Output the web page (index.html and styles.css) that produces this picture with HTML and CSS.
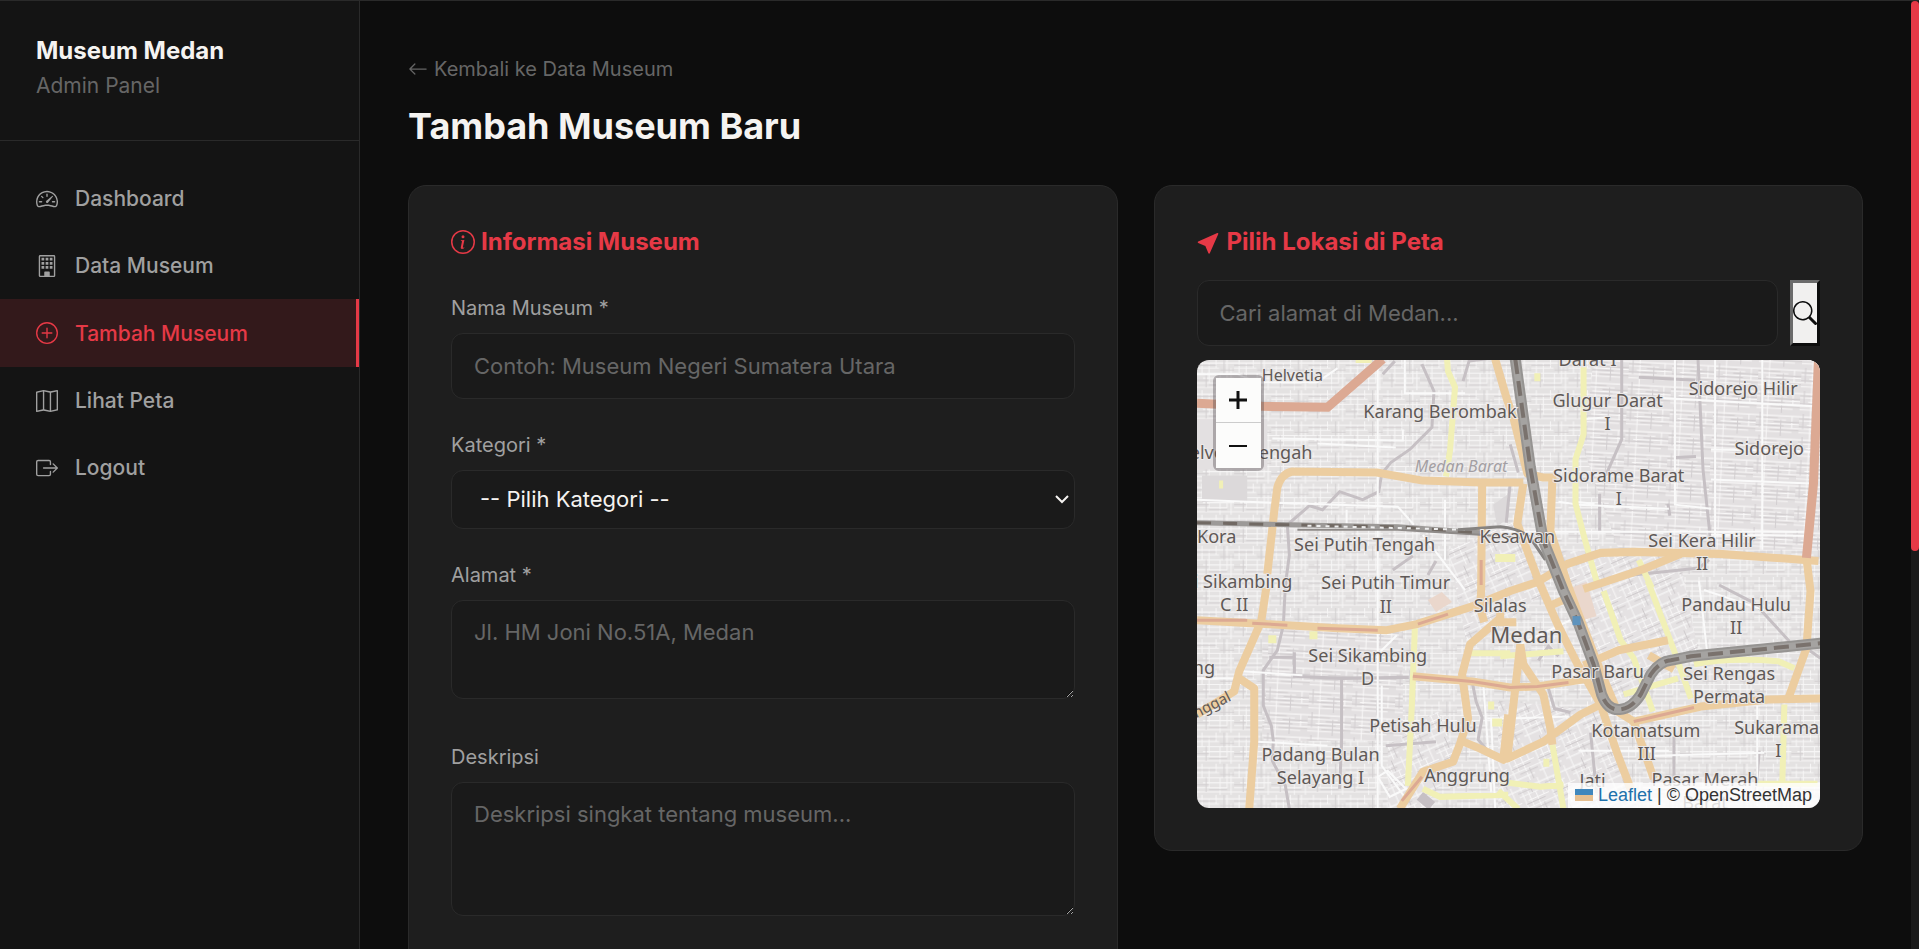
FILE: index.html
```html
<!DOCTYPE html>
<html lang="id">
<head>
<meta charset="utf-8">
<title>Tambah Museum - Museum Medan</title>
<link rel="stylesheet" href="styles.css">
</head>
<body>
<aside class="sidebar">
  <div class="brand">
    <div class="brand-name">Museum Medan</div>
    <div class="brand-sub">Admin Panel</div>
  </div>
  <nav class="nav">
    <a class="nav-link" href="#dashboard">
      <svg class="icon" viewBox="0 0 16 16"><path d="M8 4a.5.5 0 0 1 .5.5V6a.5.5 0 0 1-1 0V4.5A.5.5 0 0 1 8 4M3.732 5.732a.5.5 0 0 1 .707 0l.915.914a.5.5 0 1 1-.708.708l-.914-.915a.5.5 0 0 1 0-.707M2 10a.5.5 0 0 1 .5-.5h1.586a.5.5 0 0 1 0 1H2.5A.5.5 0 0 1 2 10m9.5 0a.5.5 0 0 1 .5-.5h1.5a.5.5 0 0 1 0 1H12a.5.5 0 0 1-.5-.5m.754-4.246a.39.39 0 0 0-.527-.02L7.547 9.31a.91.91 0 1 0 1.302 1.258l3.434-4.297a.39.39 0 0 0-.029-.518z"/><path fill-rule="evenodd" d="M0 10a8 8 0 1 1 15.547 2.661c-.442 1.253-1.845 1.602-2.932 1.25C11.309 13.488 9.475 13 8 13c-1.474 0-3.31.488-4.615.911-1.087.352-2.49.003-2.932-1.25A8 8 0 0 1 0 10m8-7a7 7 0 0 0-6.603 9.329c.203.575.923.876 1.68.63C4.397 12.533 6.358 12 8 12s3.604.532 4.923.96c.757.245 1.477-.056 1.68-.631A7 7 0 0 0 8 3"/></svg>
      Dashboard
    </a>
    <a class="nav-link" href="#data">
      <svg class="icon" viewBox="0 0 16 16"><path fill-rule="evenodd" d="M3 0h10a1 1 0 0 1 1 1v14a1 1 0 0 1-1 1H3a1 1 0 0 1-1-1V1a1 1 0 0 1 1-1m0 1v14h3v-2.500a.5.5 0 0 1 .5-.5h3a.5.5 0 0 1 .5.5V15h3V1z"/><path d="M4 2h2v2H4zM7 2h2v2H7zM10 2h2v2h-2zM4 5h2v2H4zM7 5h2v2H7zM10 5h2v2h-2zM4 8h2v2H4zM7 8h2v2H7zM10 8h2v2h-2z"/></svg>
      Data Museum
    </a>
    <a class="nav-link active" href="#tambah" aria-current="page">
      <svg class="icon" viewBox="0 0 16 16"><path d="M8 15A7 7 0 1 1 8 1a7 7 0 0 1 0 14m0 1A8 8 0 1 0 8 0a8 8 0 0 0 0 16"/><path d="M8 4a.5.5 0 0 1 .5.5v3h3a.5.5 0 0 1 0 1h-3v3a.5.5 0 0 1-1 0v-3h-3a.5.5 0 0 1 0-1h3v-3A.5.5 0 0 1 8 4"/></svg>
      Tambah Museum
    </a>
    <a class="nav-link" href="#peta">
      <svg class="icon" viewBox="0 0 16 16"><path fill-rule="evenodd" d="M15.817.113A.5.5 0 0 1 16 .5v14a.5.5 0 0 1-.402.49l-5 1a.5.5 0 0 1-.196 0L5.500 15.010l-4.902.98A.5.5 0 0 1 0 15.500v-14a.5.5 0 0 1 .402-.49l5-1a.5.5 0 0 1 .196 0L10.500.99l4.902-.98a.5.5 0 0 1 .415.103M10 1.910l-4-.8v12.980l4 .8zm1 12.980 4-.8V1.110l-4 .8zm-6-.8V1.110l-4 .8v12.980z"/></svg>
      Lihat Peta
    </a>
    <a class="nav-link" href="#logout">
      <svg class="icon" viewBox="0 0 16 16"><path fill-rule="evenodd" d="M10 12.500a.5.5 0 0 1-.5.5h-8a.5.5 0 0 1-.5-.5v-9a.5.5 0 0 1 .5-.5h8a.5.5 0 0 1 .5.5v2a.5.5 0 0 0 1 0v-2A1.500 1.500 0 0 0 9.500 2h-8A1.500 1.500 0 0 0 0 3.500v9A1.500 1.500 0 0 0 1.500 14h8a1.500 1.500 0 0 0 1.500-1.500v-2a.5.5 0 0 0-1 0z"/><path fill-rule="evenodd" d="M15.854 8.354a.5.5 0 0 0 0-.708l-3-3a.5.5 0 0 0-.708.708L14.293 7.500H5.500a.5.5 0 0 0 0 1h8.793l-2.147 2.146a.5.5 0 0 0 .708.708z"/></svg>
      Logout
    </a>
  </nav>
</aside>

<main class="main">
  <a class="back" href="#data">
    <svg class="icon-back" viewBox="0 0 16 16"><path fill-rule="evenodd" d="M15 8a.5.5 0 0 0-.5-.5H2.707l3.147-3.146a.5.5 0 1 0-.708-.708l-4 4a.5.5 0 0 0 0 .708l4 4a.5.5 0 0 0 .708-.708L2.707 8.500H14.500A.5.5 0 0 0 15 8"/></svg>
    Kembali ke Data Museum
  </a>
  <h1 class="page-title">Tambah Museum Baru</h1>

  <div class="columns">
    <form class="card">
      <h2 class="card-title">
        <svg class="icon-title" viewBox="0 0 16 16"><path d="M8 15A7 7 0 1 1 8 1a7 7 0 0 1 0 14m0 1A8 8 0 1 0 8 0a8 8 0 0 0 0 16"/><path d="m8.930 6.588-2.290.287-.082.380.450.083c.294.070.352.176.288.469l-.738 3.468c-.194.897.105 1.319.808 1.319.545 0 1.178-.252 1.465-.598l.088-.416c-.2.176-.492.246-.686.246-.275 0-.375-.193-.304-.533zM9 4.500a1 1 0 1 1-2 0 1 1 0 0 1 2 0"/></svg>
        Informasi Museum
      </h2>
      <div class="fields">
        <div class="field">
          <label for="nama">Nama Museum *</label>
          <input class="control" id="nama" type="text" placeholder="Contoh: Museum Negeri Sumatera Utara">
        </div>
        <div class="field">
          <label for="kategori">Kategori *</label>
          <div class="select-wrap">
            <select class="control select" id="kategori">
              <option>-- Pilih Kategori --</option>
            </select>
            <svg class="chevron" viewBox="0 0 14 9"><path d="M1 1l6 6 6-6" fill="none" stroke="currentColor" stroke-width="2"/></svg>
          </div>
        </div>
        <div class="field field-area">
          <label for="alamat">Alamat *</label>
          <textarea class="control area-short" id="alamat" placeholder="Jl. HM Joni No.51A, Medan"></textarea>
        </div>
        <div class="field field-area">
          <label for="deskripsi">Deskripsi</label>
          <textarea class="control area-tall" id="deskripsi" placeholder="Deskripsi singkat tentang museum..."></textarea>
        </div>
      </div>
    </form>

    <section class="card card-map">
      <h2 class="card-title">
        <svg class="icon-title" viewBox="0 0 16 16"><path d="M14.082 2.182a.5.5 0 0 1 .103.557L8.528 15.467a.5.5 0 0 1-.917-.007L5.570 10.694.803 8.652a.5.5 0 0 1-.006-.916l12.728-5.657a.5.5 0 0 1 .556.103z"/></svg>
        Pilih Lokasi di Peta
      </h2>
      <div class="search">
        <input class="control" type="text" aria-label="Cari alamat" placeholder="Cari alamat di Medan...">
        <button class="search-button" type="button" aria-label="Cari">
          <svg class="icon-search" viewBox="0 0 16 16"><path d="M11.742 10.344a6.500 6.500 0 1 0-1.397 1.398h-.001q.044.060.098.115l3.850 3.850a1 1 0 0 0 1.415-1.414l-3.850-3.850a1 1 0 0 0-.115-.1zM12 6.500a5.500 5.500 0 1 1-11 0 5.500 5.500 0 0 1 11 0"/></svg>
        </button>
      </div>
      <div class="map">
        <svg class="map-canvas" viewBox="0 0 621 448" preserveAspectRatio="xMidYMid slice">
          <defs>
            <pattern id="blocks" width="37" height="31" patternUnits="userSpaceOnUse">
              <path d="M0 4h37M0 9h22M0 14h37M6 19h31M0 24h30M0 28h37M5 0v14M12 4v20M19 0v9M23 14v17M30 0v24M34 9v22" stroke="#f7f6f6" stroke-width="1" fill="none"/>
              <path d="M0 6h19M23 11h14M0 21h12M12 26h18M9 14v14M27 0v14" stroke="#d3d0d1" stroke-width="1" fill="none"/>
            </pattern>
            <pattern id="rows" width="43" height="23" patternUnits="userSpaceOnUse" patternTransform="rotate(3)">
              <path d="M0 3h43M0 7h30M8 11h35M0 15h43M0 19h36M11 0v23M36 3v12" stroke="#f9f8f8" stroke-width="1" fill="none"/>
              <path d="M0 5h22M18 9h25M0 13h28M14 17h29M4 0v15M25 7v16" stroke="#d2ced0" stroke-width="1" fill="none"/>
            </pattern>
            <pattern id="slant" width="29" height="37" patternUnits="userSpaceOnUse" patternTransform="rotate(-24)">
              <path d="M0 5h29M0 12h20M7 18h22M0 25h29M0 32h24M4 0v37M10 5v20M17 12v25M24 0v18" stroke="#f8f7f7" stroke-width="1" fill="none"/>
              <path d="M0 8h17M4 21h20M10 28h19M14 0v12M21 25v12" stroke="#cfcbcd" stroke-width="1" fill="none"/>
            </pattern>
          </defs>
          <rect width="621" height="448" fill="#e4e2e2"/>
          <rect width="621" height="448" fill="url(#blocks)"/>
          <path d="M395 0H621V190H420L385 90zM65 270H205V380H65zM0 60H70V110H0z" fill="#e3e0e1"/>
          <path d="M395 0H621V190H420L385 90zM65 270H205V380H65z" fill="url(#rows)"/>
          <path d="M345 190L480 195 500 295 440 330 405 345zM300 340L400 350 440 448H300zM190 385L240 350 260 400 225 448H190zM250 190L320 160 350 230 270 290z" fill="#e5e2e3"/>
          <path d="M345 190L480 195 500 295 440 330 405 345zM300 340L400 350 440 448H300zM190 385L240 350 260 400 225 448H190zM250 190L320 160 350 230 270 290z" fill="url(#slant)"/>
          <path d="M5 116h45v26H5zM295 145l14 -10 2 22 -12 10z" fill="#dcd9da"/>
          <path d="M372 228l16 -6 10 34 -14 4zM230 240l14-8 10 10-16 10z" fill="#ead7cc"/>
          <g fill="none" stroke="#c6c0c4" stroke-width="3">
            <path d="M224 5L236 32 234 68 212 90 193 103 184 114 181 132 165 140 142 132 125 150 112 146 90 165 92 195 88 225 86 265 80 290 66 310 66 345 74 365 76 380 75 400 88 425 92 448"/>
            <path d="M185 15l12 -13M265 22l6 -20 30 -4M97 292v24l47 2 67 -1M144 318v65l-2 45M72 297l25 0M188 385l50 -4M195 210l20 -14M230 215l8 -14"/>
            <path d="M274 321l4 20 6 16 -4 22 12 14M312 85l8 28M312 123l-4 40M499 0l5 110 8 75M440 18l56 3M423 0v80l-16 36M477 98l20 -1M401 134v38M469 144l2 12M425 216l75 -8 10 -8M520 225l35 18 35 38M607 288l14 10M340 300l10 -14 10 10M350 328l6 20 16 4M392 372l6 60M475 376v60M560 390l-4 50"/>
            <path d="M222 435l12 10" stroke-width="10"/>
          </g>
          <g fill="none" stroke="#fafafa" stroke-width="3">
            <path d="M0 15h40l20 8h60l20 -14M207 0v34l60 0M205 70v11l-130 -2M120 84l78 4M0 140l100 4M80 143l120 4 16 18M180 0v450M247 140v60M149 150v20M225 175l42 55M179 295l20 -20M60 381l70 4M45 311l60 4M0 318h40M184 325v80l22 30M285 321l8 110M289 358h25M293 358l4 90" stroke-width="2"/>
            <path d="M450 38l165 9M476 0l0 145 36 4M516 0v188M360 142l20 3 90 4M384 60l25 -2M512 90l100 2M512 120l100 4M512 175l98 1M396 144l-20 -2M322 284l50 -24M500 221l8 70M505 230l60 20M310 358l60 -2M455 395l110 -3M558 345v100M380 390l90 0M563 0v190M302 172h310" stroke-width="2"/>
            <path d="M190 410l18 18 -16 8 -12 -20z" stroke-width="2"/>
          </g>
          <g fill="none" stroke="#f1f0b6" stroke-width="6">
            <path d="M249 0L250 12 257 28 252 91 248 117M385 8V75L377 100V144L385 175 399 225"/>
            <path d="M217 268L214 345 210 425M405 231L422 280 435 298 454 351M449 221L475 290 492 338M495 304Q530 297 579 301L595 308M302 296L365 291M425 334L479 318M354 384L365 448M585 344L583 421M225 428L242 436 310 434M302 421L342 426 365 424M440 200L453 228M300 430l20 18M272 293h40M558 423h60"/>
            <path d="M158 0h16M112 275h8M75 275v8M22 125h4M297 198h20M290 345h6M294 362h10M345 402h6M336 18h6" stroke-width="8"/>
          </g>
          <g fill="none" stroke="#eccda0" stroke-width="8" stroke-linejoin="round">
            <path d="M70 214L77 151 80 128Q84 114 95 112L179 113 225 121 284 123 325 123"/>
            <path d="M284 124L283 231 282 248 286 262M69 228L64 261 42 311 37 331 0 354M42 318L57 328V381L52 448"/>
            <path d="M0 260L72 264 140 268 189 270 219 264 275 246 312 231 339 222 369 204 402 193 435 192 520 194 619 201"/>
            <path d="M482 194L445 209 385 229M297 0L309 41 315 58 329 114 345 118 354 118 352 171 369 224 379 251 402 311 419 351 435 361 502 346 569 339 621 338"/>
            <path d="M325 124L319 164 339 218 359 264 379 304 402 344 419 394 432 428"/>
            <path d="M302 258L272 284 264 314 270 358 262 383 255 401 225 411 202 448M265 381L282 388 305 399 310 354"/>
            <path d="M322 284L317 328 309 398 345 381 382 354 402 344M322 284L325 304 345 334 352 368 354 384M435 361L455 418M385 305L420 290 469 280M450 295l25 14M607 198L611 231 607 288 589 338M302 250l0 12 16 0M348 247l24 -10"/>
            <path d="M215 316L274 321 312 327 339 326 392 318"/>
          </g>
          <g fill="none" stroke="#dca993" stroke-width="9">
            <path d="M0 44L65 47 130 48 185 0M619 0L614 124 607 198"/>
            <path d="M215 316L274 321 312 327 339 326 370 322M55 263l35 2M435 361l60 -14M0 260h50M120 268l60 2M220 264l30 -10M283 200v25M204 440l20 -24" stroke-width="3"/>
          </g>
          <g fill="none">
            <path d="M0 163L92 165 200 167 282 173" stroke="#9c9997" stroke-width="5"/>
            <path d="M100 170L200 170 282 175 322 178" stroke="#8e8a88" stroke-width="2"/>
            <path d="M0 163L92 165 200 167 282 173" stroke="#716963" stroke-width="3" stroke-dasharray="14 12"/>
            <path d="M110 166L270 170" stroke="#eeeeee" stroke-width="2" stroke-dasharray="4 5"/>
            <path d="M260 170L302 167Q322 169 332 178L347 200" stroke="#858280" stroke-width="3"/>
            <path d="M317 0L332 108 345 181 365 231 379 261 395 304 403 334Q409 350 421 349 433 348 442 334L452 314Q461 301 472 300L492 296 621 283" stroke="#969492" stroke-width="11"/>
            <path d="M317 0L332 108 345 181 365 231 379 261 395 304 403 334Q409 350 421 349 433 348 442 334L452 314Q461 301 472 300L492 296 621 283" stroke="#a5a3a1" stroke-width="7"/>
            <path d="M317 0L332 108 345 181 365 231 379 261 395 304 403 334Q409 350 421 349 433 348 442 334L452 314Q461 301 472 300L492 296 621 283" stroke="#7a726d" stroke-width="4" stroke-dasharray="15 7"/>
          </g>
          <rect x="374" y="256" width="8" height="9" fill="#5e93bd"/>
          <g class="places">
            <text class="minor" x="95" y="22">Helvetia</text>
            <text x="242" y="59">Karang Berombak</text>
            <text class="district" x="263" y="112">Medan Barat</text>
            <text class="end" x="115" y="100">Helvetia Tengah</text>
            <text class="start" x="0" y="183">Kora</text>
            <text x="167" y="191">Sei Putih Tengah</text>
            <text x="319" y="183">Kesawan</text>
            <text class="end" x="95" y="228">Sei Sikambing</text>
            <text x="37" y="251">C II</text>
            <text x="188" y="229">Sei Putih Timur</text>
            <text x="188" y="253">II</text>
            <text x="389" y="7">Darat I</text>
            <text x="409" y="48">Glugur Darat</text>
            <text x="409" y="71">I</text>
            <text x="544" y="36">Sidorejo Hilir</text>
            <text x="570" y="96">Sidorejo</text>
            <text x="420" y="122">Sidorame Barat</text>
            <text x="420" y="145">I</text>
            <text x="503" y="187">Sei Kera Hilir</text>
            <text x="503" y="210">II</text>
            <text x="302" y="252">Silalas</text>
            <text class="city" x="328" y="283">Medan</text>
            <text x="170" y="302">Sei Sikambing</text>
            <text x="170" y="325">D</text>
            <text class="end" x="18" y="314">ng</text>
            <text class="street" transform="translate(-9 362) rotate(-27)">unggal</text>
            <text x="225" y="371">Petisah Hulu</text>
            <text x="123" y="400">Padang Bulan</text>
            <text x="123" y="423">Selayang I</text>
            <text x="269" y="421">Anggrung</text>
            <text x="537" y="251">Pandau Hulu</text>
            <text x="537" y="274">II</text>
            <text x="399" y="318">Pasar Baru</text>
            <text x="530" y="320">Sei Rengas</text>
            <text x="530" y="343">Permata</text>
            <text x="447" y="376">Kotamatsum</text>
            <text x="448" y="399">III</text>
            <text class="start" x="535" y="373">Sukaramai</text>
            <text x="579" y="396">I</text>
            <text x="394" y="426">Jati</text>
            <text x="506" y="425">Pasar Merah</text>
            <text x="506" y="448">Barat</text>
          </g>
        </svg>
        <div class="zoom">
          <button class="zoom-button" type="button" aria-label="Perbesar"><svg class="zoom-icon" viewBox="0 0 18 18"><path d="M0 9h18M9 0v18"/></svg></button>
          <button class="zoom-button" type="button" aria-label="Perkecil"><svg class="zoom-icon" viewBox="0 0 18 18"><path class="thin" d="M0 9h18"/></svg></button>
        </div>
        <div class="attribution">
          <a href="#leaflet"><svg class="flag" viewBox="0 0 18 12"><path fill="#3f87bd" d="M0 0h18v6H0z"/><path fill="#e6bf90" d="M0 6h18v6H0z"/></svg> Leaflet</a> | © OpenStreetMap
        </div>
      </div>
    </section>
  </div>
</main>
<div class="rail"><div class="rail-thumb"></div></div>
</body>
</html>
```
FILE: styles.css
```css
* { box-sizing: border-box; }

body {
  margin: 0;
  height: 100vh;
  overflow: hidden;
  display: flex;
  border-top: 1px solid #2a2a2a;
  background: #0d0d0d;
  color: #f5f3f1;
  font-family: Inter, "Liberation Sans", sans-serif;
  font-size: 20px;
}

a { color: inherit; text-decoration: none; }
svg { display: block; fill: currentColor; flex: none; }

.sidebar {
  width: 360px;
  flex: none;
  background: #141414;
  border-right: 1px solid #2a2a2a;
}
.brand {
  height: 140px;
  padding: 32px 36px 0;
  border-bottom: 1px solid #2a2a2a;
}
.brand-name { font-size: 24px; line-height: 36px; font-weight: 700; }
.brand-sub { font-size: 21px; line-height: 34px; color: #666; }

.nav { padding-top: 24px; }
.nav-link {
  display: flex;
  align-items: center;
  gap: 17px;
  min-height: 67px;
  padding: 0 36px;
  color: #a0a0a0;
  font-size: 21px;
  font-weight: 500;
}
.nav-link.active {
  min-height: 68px;
  background: #33191b;
  color: #e63946;
  border-right: 3px solid #e63946;
}
.icon { width: 22px; height: 22px; }

.main {
  flex: 1;
  min-width: 0;
  padding: 53px 48px 0;
}
.back {
  display: flex;
  align-items: center;
  gap: 6px;
  line-height: 30px;
  color: #666;
}
.icon-back { width: 20px; height: 20px; }
.page-title {
  margin: 20px 0 36px;
  font-size: 36px;
  line-height: 45px;
  font-weight: 700;
}

.columns {
  display: grid;
  grid-template-columns: 1fr 1fr;
  gap: 36px;
  align-items: start;
}
.card {
  padding: 42px;
  background: #1e1e1e;
  border: 1px solid #2a2a2a;
  border-radius: 18px;
  min-width: 0;
}
.card-title {
  display: flex;
  align-items: center;
  gap: 6px;
  margin: 0 0 38px;
  color: #e63946;
  font-size: 24px;
  line-height: 28px;
  font-weight: 700;
}
.card-map .card-title { margin-bottom: 24px; }
.icon-title { width: 24px; height: 24px; }

.fields { display: grid; gap: 32px; }
.field { display: grid; gap: 10px; }
.field-area { padding-bottom: 12px; }
label { line-height: 29px; color: #a0a0a0; }

.control {
  width: 100%;
  height: 66px;
  padding: 18px 22px;
  border: 1px solid #2a2a2a;
  border-radius: 12px;
  background: #1a1a1a;
  color: #f5f3f1;
  font: 22px/27px Inter, "Liberation Sans", sans-serif;
}
.control::placeholder { color: #666; opacity: 1; }
.select-wrap { display: grid; align-items: center; }
.select-wrap > * { grid-area: 1 / 1; }
.select {
  height: 59px;
  padding: 0 28px;
  appearance: none;
}
.chevron {
  width: 14px;
  height: 9px;
  margin-right: 6px;
  justify-self: end;
  pointer-events: none;
}
textarea.control { display: block; resize: vertical; }
textarea.area-short { height: 99px; }
textarea.area-tall { height: 134px; }

.search {
  display: flex;
  gap: 12px;
  margin-bottom: 14px;
}
.search-button {
  flex: none;
  width: 30px;
  padding: 0;
  display: grid;
  place-items: center;
  border: 3px solid;
  border-color: #6b6b6b #0d0d0d #0d0d0d #6b6b6b;
  background: #f1f0ef;
  color: #0d0d0d;
}
.icon-search { width: 24px; height: 24px; }

.map {
  position: relative;
  height: 448px;
  border-radius: 12px;
  overflow: hidden;
}
.map-canvas { width: 100%; height: 100%; }
.places {
  font: 400 18px "Noto Sans", sans-serif;
  text-anchor: middle;
  fill: #5f5957;
  stroke: #ebe9e9;
  stroke-width: 2px;
  paint-order: stroke;
}
.places .minor { font-size: 16px; }
.places .end { text-anchor: end; }
.places .start { text-anchor: start; }
.places .city { font-size: 22px; }
.places .district { font-size: 16px; font-style: italic; fill: #a39fa3; }
.places .street { font-size: 15px; text-anchor: start; stroke: none; }

.zoom {
  position: absolute;
  top: 15px;
  left: 16px;
  border: 3px solid rgba(70, 60, 65, 0.35);
  border-radius: 6px;
}
.zoom-button {
  display: grid;
  place-items: center;
  width: 45px;
  height: 45px;
  padding: 0;
  border: 0;
  background: #fcfcfb;
}
.zoom-button:first-child { border-bottom: 1px solid #ccc; }
.zoom-icon { width: 18px; height: 18px; stroke: #111; stroke-width: 3px; }
.zoom-icon .thin { stroke-width: 2px; }

.attribution {
  position: absolute;
  right: 0;
  bottom: 0;
  padding: 0 8px 0 7px;
  background: rgba(255, 255, 255, 0.8);
  color: #333;
  font: 18px/25px "Liberation Sans", Arial, sans-serif;
}
.attribution a { color: #2171ab; }
.flag { display: inline-block; width: 18px; height: 12px; }

.rail {
  flex: none;
  width: 8px;
  background: #1a1a1a;
}
.rail-thumb {
  height: 58%;
  border-radius: 4px;
  background: #e63946;
}
```
